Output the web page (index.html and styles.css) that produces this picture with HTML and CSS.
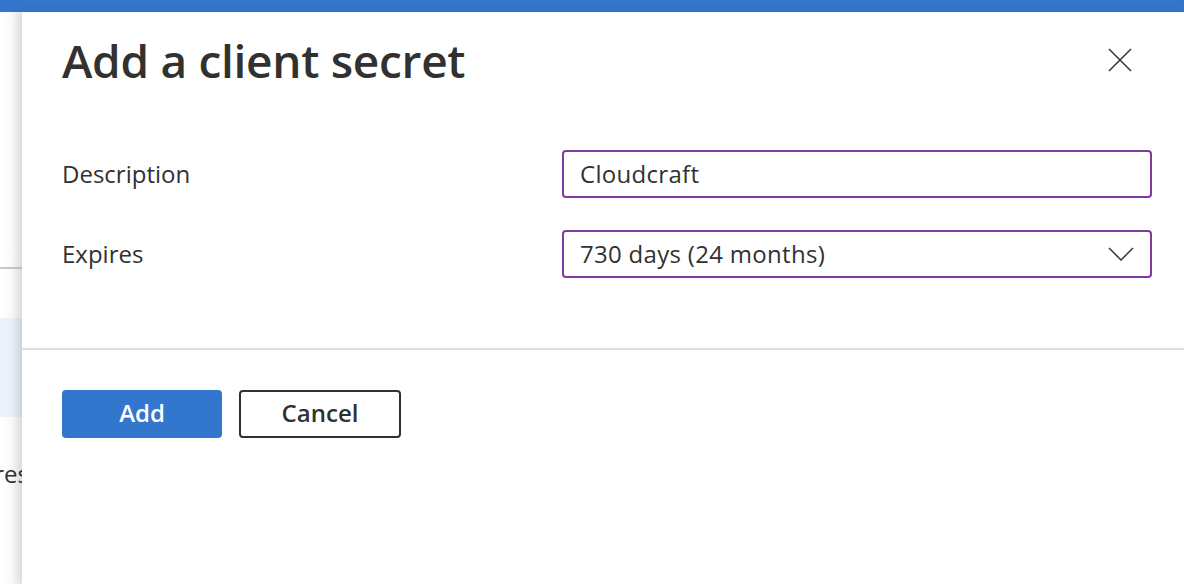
FILE: index.html
```html
<!DOCTYPE html>
<html lang="en">
<head>
<meta charset="utf-8">
<title>Add a client secret</title>
<link rel="stylesheet" href="styles.css">
</head>
<body>
<div class="topbar"></div>
<div class="main">
  <aside class="behind">
    <div class="behind-gap1"></div>
    <div class="behind-line"></div>
    <div class="behind-gap2"></div>
    <div class="behind-selected"></div>
    <div class="behind-text"><span>Expires</span></div>
  </aside>
  <section class="panel">
    <header class="panel-header">
      <h1 class="title">Add a client secret</h1>
      <button class="close" aria-label="Close">
        <svg width="24" height="24" viewBox="0 0 24 24"><path d="M1 1 L23 23 M23 1 L1 23" stroke="#3b3a39" stroke-width="1.6" fill="none"/></svg>
      </button>
    </header>
    <div class="form">
      <label class="label">Description</label>
      <div class="field">Cloudcraft</div>
      <label class="label">Expires</label>
      <div class="field select">
        <span>730 days (24 months)</span>
        <svg class="chev" width="26" height="14" viewBox="0 0 26 14"><path d="M1 1 L13 13 L25 1" stroke="#3b3a39" stroke-width="1.5" fill="none"/></svg>
      </div>
    </div>
    <div class="divider"></div>
    <div class="footer">
      <button class="btn primary">Add</button>
      <button class="btn secondary">Cancel</button>
    </div>
  </section>
</div>
</body>
</html>
```

FILE: styles.css
```css
html, body {
  margin: 0;
  padding: 0;
  background: #ffffff;
  font-family: "Open Sans", "Noto Sans", sans-serif;
  color: #323130;
}

.topbar {
  height: 12px;
  background: #3277cd;
}

.main {
  display: flex;
  height: 572px;
}

.behind {
  width: 22px;
  flex: none;
  overflow: hidden;
  display: flex;
  flex-direction: column;
  background: linear-gradient(to right, #ffffff 0%, #fafafa 50%, #ececec 100%);
}

.behind-gap1 { height: 255px; }
.behind-line { height: 2px; background: #c8c8c8; }
.behind-gap2 { height: 49px; }
.behind-selected { height: 99px; background: linear-gradient(to right, #eef3fb 0%, #e9eef7 60%, #dfe3ec 100%); }
.behind-text {
  margin-top: 41px;
  display: flex;
  justify-content: flex-end;
  white-space: nowrap;
  font-size: 24px;
  line-height: 32px;
  color: #323130;
}
.behind-text span { margin-right: -7px; }

.panel {
  flex: 1;
  position: relative;
  z-index: 1;
  background: #ffffff;
  box-shadow: -4px 0 10px rgba(0, 0, 0, 0.09);
  display: flex;
  flex-direction: column;
}

.panel-header {
  display: flex;
  justify-content: space-between;
  align-items: center;
  padding: 18px 52px 0 40px;
  height: 60px;
}

.title {
  margin: 0;
  font-size: 46px;
  font-weight: 600;
  line-height: 60px;
  color: #323130;
  letter-spacing: -0.3px;
}

.close {
  width: 24px;
  height: 24px;
  padding: 0;
  border: 0;
  background: none;
  display: flex;
}

.form {
  margin-top: 60px;
  padding: 0 32px 0 40px;
  display: grid;
  grid-template-columns: 500px 1fr;
  grid-auto-rows: 48px;
  row-gap: 32px;
  align-items: center;
}

.label {
  font-size: 24px;
  line-height: 32px;
  color: #323130;
}

.field {
  height: 48px;
  box-sizing: border-box;
  border: 2px solid #80399f;
  border-radius: 4px;
  padding: 0 16px 2px 16px;
  display: flex;
  align-items: center;
  font-size: 24px;
  letter-spacing: 0.3px;
  color: #323130;
}

.select {
  justify-content: space-between;
}

.chev { margin-right: 0; margin-top: 2px; }

.divider {
  margin-top: 70px;
  height: 2px;
  background: #e1dfdd;
}

.footer {
  padding: 40px 0 0 40px;
  display: flex;
  gap: 17px;
}

.btn {
  height: 48px;
  box-sizing: border-box;
  border-radius: 4px;
  font-family: "Open Sans", "Noto Sans", sans-serif;
  font-size: 24px;
  font-weight: 600;
  padding: 0 0 4px 0;
  display: flex;
  align-items: center;
  justify-content: center;
}

.primary {
  width: 160px;
  background: #3277cd;
  border: 0;
  color: #ffffff;
}

.secondary {
  width: 162px;
  background: #ffffff;
  border: 2px solid #323130;
  color: #323130;
}
```
